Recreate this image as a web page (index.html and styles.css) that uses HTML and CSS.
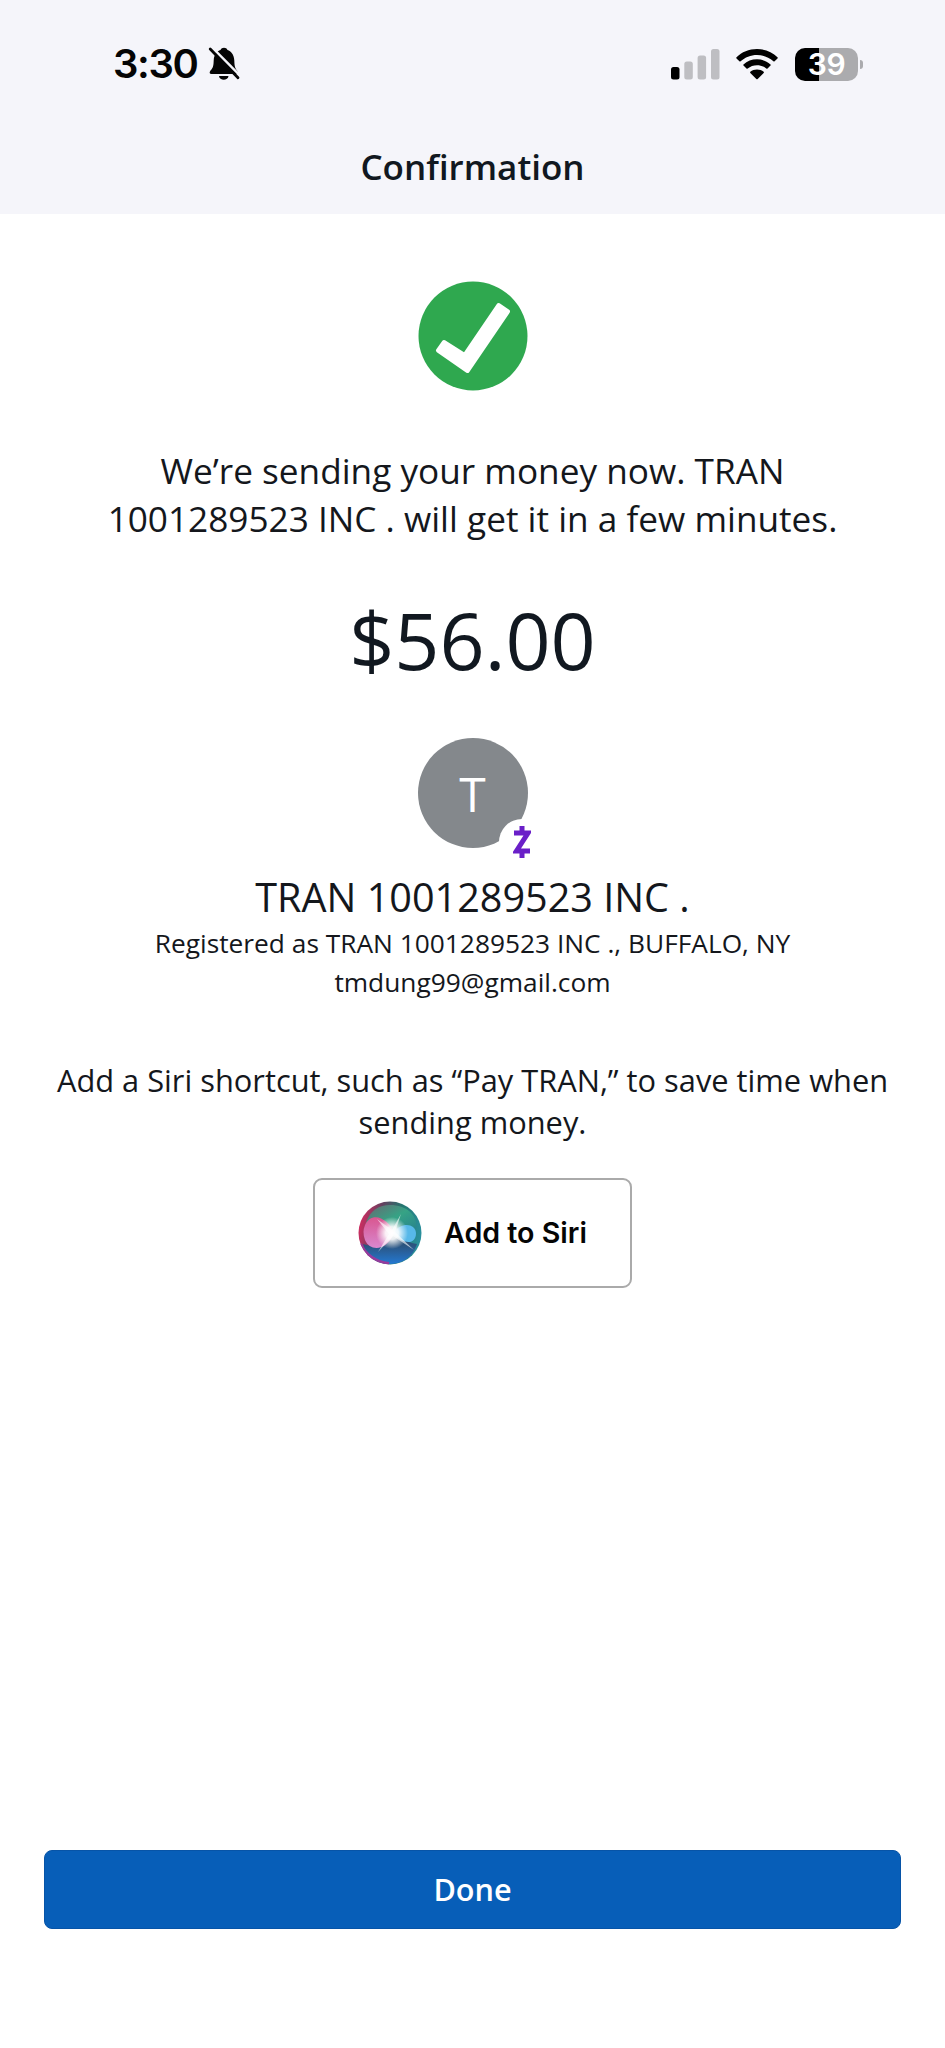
FILE: index.html
```html
<!DOCTYPE html>
<html lang="en">
<head>
<meta charset="utf-8">
<title>Confirmation</title>
<link rel="stylesheet" href="styles.css">
</head>
<body>
<header class="header">
  <div class="status">
    <div class="status-left">
      <span class="time">3:30</span>
      <svg class="bell" width="32" height="36" viewBox="0 0 32 36">
        <path d="M2.500 24.500C1 26.500 1.500 28 3.500 28H28C30 28 30.500 26.500 29 24.500C26.500 21.500 26.500 19 26.300 14.500C26 8.500 23 5 19.500 4C18.500.9 13.500.9 12.500 4C9 5 6 8.500 5.700 14.500C5.500 19 5.500 21.500 2.500 24.500Z"/>
        <path d="M11 30H20.500C20 35 11.500 35 11 30Z"/>
        <path class="bell-gap" d="M3.500 1L33 30.500"/>
        <path class="bell-slash" d="M2.200 3L30 31.800"/>
      </svg>
    </div>
    <div class="status-right">
      <svg class="signal" width="49" height="32" viewBox="0 0 49 32">
        <rect y="19" width="8.500" height="12.500" rx="2.500"/>
        <g class="dim"><rect x="13.300" y="13.500" width="8.500" height="18" rx="2.500"/><rect x="26.600" y="7.500" width="8.500" height="24" rx="2.500"/><rect x="40" y="1" width="8.500" height="30.500" rx="2.500"/></g>
      </svg>
      <svg class="wifi" width="42" height="31" viewBox="0 0 42 31">
        <path d="M21 0C29 0 36.300 3.100 41.500 8.200Q42 8.800 41.500 9.400L38.600 12.300Q38 12.800 37.400 12.300C33 8.200 27.300 5.900 21 5.900S9 8.200 4.600 12.300Q4 12.800 3.400 12.300L.5 9.400Q0 8.800.5 8.200C5.700 3.100 13 0 21 0Z"/>
        <path d="M21 10.300C26.200 10.300 30.900 12.200 34.500 15.400Q35.100 16 34.500 16.600L31.500 19.500Q30.900 20 30.300 19.500C27.700 17.400 24.500 16.200 21 16.200S14.300 17.400 11.700 19.500Q11.100 20 10.500 19.500L7.500 16.600Q6.900 16 7.500 15.400C11.100 12.200 15.800 10.300 21 10.300Z"/>
        <path d="M21 20.500C23.600 20.500 25.900 21.300 27.700 22.700Q28.200 23.300 27.700 23.900L21.700 29.900Q21 30.500 20.300 29.900L14.300 23.900Q13.800 23.300 14.300 22.700C16.100 21.300 18.400 20.500 21 20.500Z"/>
      </svg>
      <div class="battery"><span class="battery-level">39</span><span class="battery-tip"></span></div>
    </div>
  </div>
  <h1 class="title">Confirmation</h1>
</header>
<main class="content">
  <svg class="check" width="110" height="110" viewBox="0 0 110 110">
    <circle cx="55" cy="55" r="54.500" fill="#2fa84f"/>
    <path d="M26 61L46.500 74L80.500 24L90 30.500L49.500 90L20 69.500Z" fill="#fff" stroke="#fff" stroke-width="4" stroke-linejoin="round"/>
  </svg>
  <p class="message">We’re sending your money now. TRAN<br>1001289523 INC . will get it in a few minutes.</p>
  <p class="amount">$56.00</p>
  <div class="avatar">T
    <span class="badge"><svg width="18" height="32" viewBox="0 0 18 32"><path d="M9 0V8M9 24V32M1 7H15L3.500 25H17" fill="none" stroke="#6a1fc8" stroke-width="5"/></svg></span>
  </div>
  <h2 class="name">TRAN 1001289523 INC .</h2>
  <p class="detail">Registered as TRAN 1001289523 INC ., BUFFALO, NY</p>
  <p class="detail">tmdung99@gmail.com</p>
  <p class="hint">Add a Siri shortcut, such as “Pay TRAN,” to save time when<br>sending money.</p>
  <button class="siri">
    <svg width="64" height="64" viewBox="0 0 64 64">
      <defs>
        <linearGradient id="rim" x1="0" y1=".4" x2="1" y2=".6"><stop offset="0" stop-color="#d32d62"/><stop offset=".3" stop-color="#64405f"/><stop offset=".6" stop-color="#24766f"/><stop offset="1" stop-color="#2a91a0"/></linearGradient>
        <linearGradient id="green" x1="0" y1="0" x2="1" y2="1"><stop offset="0" stop-color="#6b6570"/><stop offset=".5" stop-color="#36a385"/><stop offset="1" stop-color="#267f8e"/></linearGradient>
        <linearGradient id="blue" x1="0" y1="0" x2="0" y2="1"><stop offset="0" stop-color="#294c67"/><stop offset=".4" stop-color="#2b5480"/><stop offset="1" stop-color="#2479d2"/></linearGradient>
        <linearGradient id="pink" x1="0" y1="0" x2="0" y2="1"><stop offset="0" stop-color="#d9568f"/><stop offset="1" stop-color="#d888cf"/></linearGradient>
        <radialGradient id="glow"><stop offset="0" stop-color="#fff"/><stop offset=".4" stop-color="#fff" stop-opacity=".9"/><stop offset="1" stop-color="#fff" stop-opacity="0"/></radialGradient>
        <clipPath id="orb"><circle cx="32" cy="32" r="31.500"/></clipPath>
      </defs>
      <g clip-path="url(#orb)">
        <rect width="64" height="64" fill="url(#rim)"/>
        <path d="M8 22C12 8 23 3 35 4C51 6 60 15 58 29L35 33Z" fill="url(#green)"/>
        <path d="M5 43Q23 49 36 32Q51 43 59 43Q52 63 31 63Q11 62 5 43Z" fill="url(#blue)"/>
        <path d="M2 43Q10 60 31 63" fill="none" stroke="#953b9d" stroke-width="4"/>
        <path d="M7 24C14 9 31 18 36 32C29 50 12 51 7 39Q4 31 7 24Z" fill="url(#pink)"/>
        <path d="M35 32C43 21 57 22 58 32C58 45 44 43 35 32Z" fill="#57b8e9"/>
        <circle cx="34" cy="32" r="16" fill="url(#glow)"/>
        <path d="M19 18L34 29L43 13L37 31L56 49L35 35L20 51L31 33Z" fill="#fff" opacity=".6"/>
      </g>
    </svg>
    <span>Add to Siri</span>
  </button>
  <button class="done">Done</button>
</main>
</body>
</html>
```
FILE: styles.css
```css
* { box-sizing: border-box; }
body { margin: 0; background: #fff; color: #14171c; font-family: "Open Sans", "Noto Sans", sans-serif; }
h1, h2, p { margin: 0; font-weight: 400; white-space: nowrap; }
button { font: inherit; margin: 0; padding: 0; }
svg { display: block; flex: none; }

.header { height: 214px; background: #f5f5fa; }
.status { height: 128px; padding: 0 82px 0 113px; display: flex; justify-content: space-between; align-items: center; }
.status-left, .status-right { display: flex; align-items: center; }
.time { font: 600 40px/48px Inter, sans-serif; color: #050505; letter-spacing: -1.4px; }
.bell { margin-left: 11px; fill: #050505; }
.bell-gap { stroke: #f5f5fa; stroke-width: 2.500; }
.bell-slash { stroke: #050505; stroke-width: 2.800; stroke-linecap: round; }
.signal { margin-right: 16px; }
.dim { fill: #bebec2; }
.wifi { margin-right: 17px; }
.battery { display: flex; align-items: center; gap: 2px; }
.battery-level { width: 63px; height: 33px; border-radius: 10px; background: linear-gradient(90deg, #000 24px, #ababae 24px); color: #fff; font: 600 30px/33px Inter, sans-serif; letter-spacing: -.5px; text-align: center; }
.battery-tip { width: 3px; height: 9px; border-radius: 0 3px 3px 0; background: #ababae; }
.title { text-align: center; font-size: 35px; line-height: 77px; font-weight: 600; color: #111820; }

.content { height: 1834px; display: flex; flex-direction: column; align-items: center; text-align: center; }
.check { margin-top: 67px; }
.message { margin-top: 55px; font-size: 35.2px; line-height: 48px; }
.amount { margin-top: 45px; font-size: 79px; line-height: 106px; color: #111820; }
.avatar { position: relative; margin-top: 45px; width: 110px; height: 110px; border-radius: 50%; background: #84888c; color: #fff; font-size: 48px; line-height: 111px; }
.badge { position: absolute; left: 81px; top: 81px; width: 46px; height: 46px; border-radius: 50%; background: #fff; display: flex; align-items: center; justify-content: center; }
.name { margin-top: 23px; font-size: 39.6px; line-height: 52px; }
.detail { font-size: 26.3px; line-height: 39px; }
.name + .detail { margin-top: 1px; }
.hint { margin-top: 57px; font-size: 30.8px; line-height: 42px; }
.siri { margin-top: 35px; width: 319px; height: 110px; border: 2px solid #aaa; border-radius: 9px; background: #fff; color: #050505; display: flex; align-items: center; justify-content: center; gap: 22px; font: 600 28.6px/34px Inter, sans-serif; }
.done { margin-top: auto; margin-bottom: 119px; width: 857px; height: 79px; border: 1px solid #0754a7; border-radius: 8px; background: #075eb8; color: #fff; font-size: 30.6px; line-height: 77px; font-weight: 600; }
```
